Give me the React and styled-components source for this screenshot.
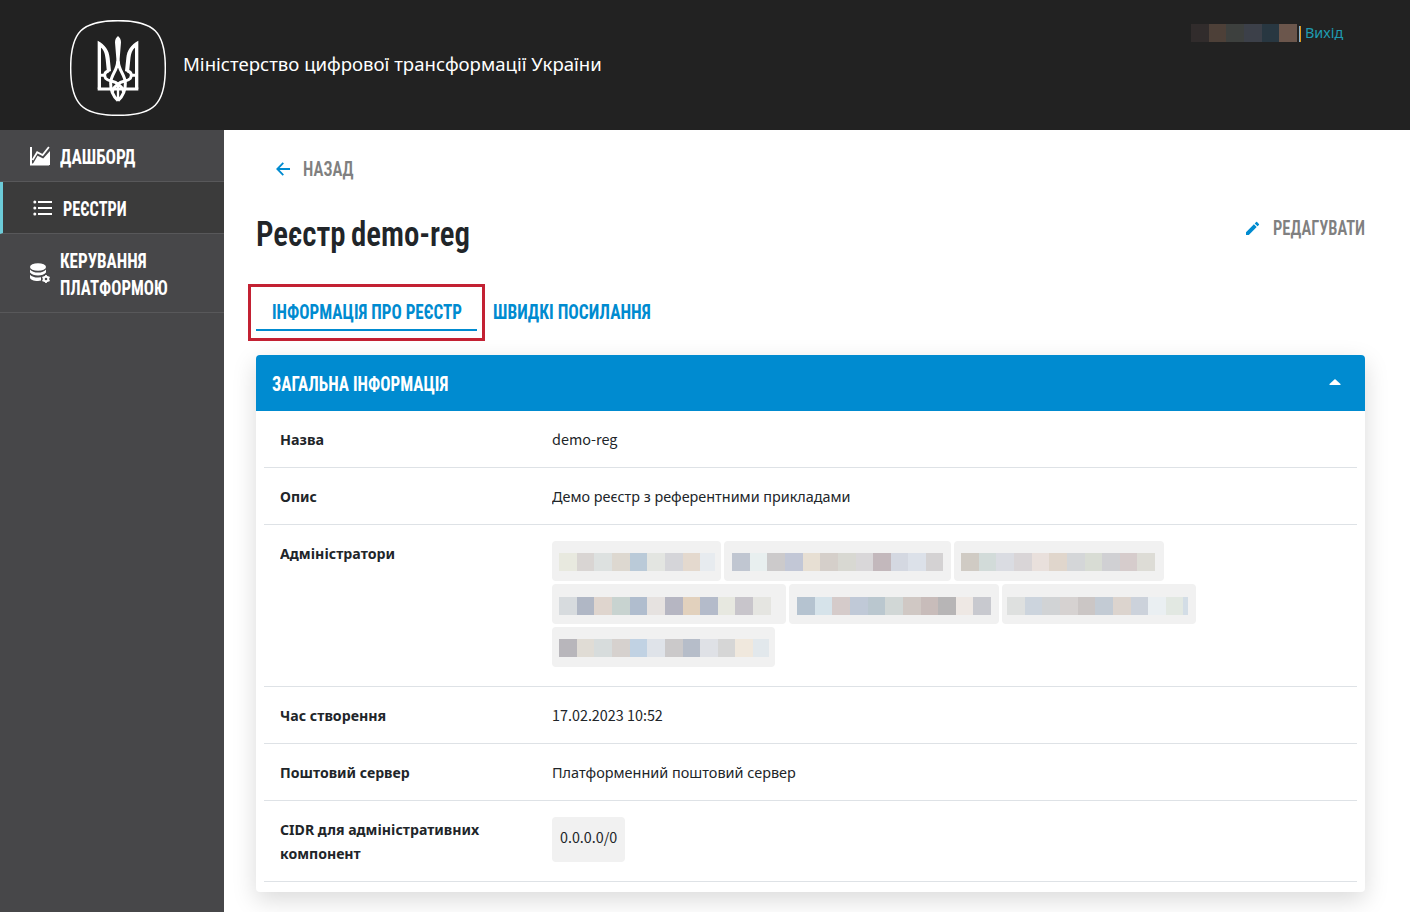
import React, { useLayoutEffect, useRef, useState } from "react";
import styled, { createGlobalStyle, css } from "styled-components";

const GlobalStyle = createGlobalStyle`
  *, *::before, *::after { box-sizing: border-box; }
  body {
    margin: 0;
    background: #fff;
    color: #212529;
    font-family: "Noto Sans", "Open Sans", sans-serif;
    overflow: hidden;
  }
  a { color: inherit; text-decoration: none; }
`;

const Slot = styled.span`
  display: inline-block;
  width: ${(p) => p.$width}px;
  white-space: nowrap;
`;

const Run = styled.span`
  display: inline-block;
  transform-origin: 0 50%;
`;

/* Condenses a line of text so that it takes exactly the given width. */
function Fit({ width, children }) {
  const ref = useRef(null);
  const [scale, setScale] = useState(1);
  useLayoutEffect(() => {
    setScale(width / ref.current.offsetWidth);
  }, [width, children]);
  return (
    <Slot $width={width}>
      <Run ref={ref} style={{ transform: `scaleX(${scale})` }}>
        {children}
      </Run>
    </Slot>
  );
}

const condensed = css`
  font-family: Roboto, "Liberation Sans Narrow", sans-serif;
  font-stretch: 75%;
  font-size: 19.6px;
  font-weight: 750;
  line-height: 27px;
`;

const Page = styled.div`
  display: flex;
  flex-direction: column;
  height: 912px;
`;

const Header = styled.header`
  display: flex;
  align-items: flex-start;
  height: 130px;
  padding: 20px 67px 0 70px;
  background: #222;
  color: #fff;
`;

const HeaderTitle = styled.div`
  margin: 30px auto 0 17px;
  font-size: 18.8px;
  line-height: 28px;
`;

const UserBar = styled.div`
  display: flex;
  align-items: flex-start;
  padding-top: 4px;
`;

const Divider = styled.span`
  width: 2px;
  height: 16px;
  margin: 2px 4px 0 2px;
  background: linear-gradient(90deg, #8fb4cc 50%, #e39a1b 50%);
`;

const LogoutLink = styled.a`
  font-size: 14.8px;
  line-height: 20px;
  margin-top: -2px;
  color: #1f9ab0;
`;

const Body = styled.div`
  display: flex;
  flex: 1;
  min-height: 0;
`;

const Sidebar = styled.nav`
  width: 224px;
  flex: none;
  background: #474749;
`;

const NavItem = styled.a`
  ${condensed}
  display: flex;
  align-items: center;
  gap: 10px;
  padding: 12px 0 12px 30px;
  border-bottom: 1px solid #58585a;
  border-left: ${(p) => (p.$active ? "3px solid #6ccbd8" : "0")};
  background: ${(p) => (p.$active ? "#3b3b3b" : "transparent")};
  color: #fff;

  svg { flex: none; }
`;

const NavLabel = styled.span`
  display: flex;
  flex-direction: column;
  padding-top: 2px;
  margin-bottom: -2px;
`;

const Main = styled.main`
  flex: 1;
  padding: 26px 45px 0 32px;
`;

const TextAction = styled.a`
  ${condensed}
  font-weight: 650;
  display: flex;
  align-items: center;
  color: #808080;
`;

const BackLink = styled(TextAction)`
  gap: 13px;
  padding-left: 20px;

  svg { margin-top: -1px; }
`;

const EditLink = styled(TextAction)`
  gap: 13px;
`;

const TitleRow = styled.div`
  display: flex;
  justify-content: space-between;
  align-items: flex-start;
  height: 101px;
  padding-top: 32px;
`;

const Title = styled.h1`
  ${condensed}
  margin: -2px 0 0;
  font-size: 35.5px;
  font-weight: 640;
  line-height: 42px;
  word-spacing: -2px;
  color: #212529;
`;

const Tabs = styled.div`
  display: flex;
  align-items: center;
  height: 57px;
  margin-left: -8px;
`;

const TabFrame = styled.div`
  height: 57px;
  padding: 10px 5px 0;
  border: 3px solid #c32133;
`;

const Tab = styled.a`
  ${condensed}
  display: block;
  height: 34px;
  padding: 2px ${(p) => (p.$active ? 15.5 : 9)}px 0 ${(p) => (p.$active ? 16 : 8)}px;
  border-bottom: ${(p) => (p.$active ? "2px solid #008bd0" : "0")};
  margin-bottom: ${(p) => (p.$active ? 0 : -2)}px;
  color: #008bd0;
`;

const Card = styled.section`
  height: 537px;
  margin-top: 14px;
  border-radius: 4px;
  background: #fff;
  box-shadow: 0 8px 24px rgba(0, 0, 0, 0.15);
`;

const CardHeader = styled.header`
  ${condensed}
  display: flex;
  align-items: center;
  justify-content: space-between;
  height: 56px;
  padding: 3px 24px 0 16px;
  border-radius: 4px 4px 0 0;
  background: #008bd0;
  color: #fff;

  svg { margin-top: -5px; }
`;

const Rows = styled.dl`
  margin: 0 8px;
`;

const Row = styled.div`
  display: flex;
  height: ${(p) => p.$height}px;
  padding: 16px;
  border-bottom: 1px solid #dee2e6;
  font-size: 14.8px;
  line-height: 24px;
`;

const Key = styled.dt`
  display: flex;
  flex-direction: column;
  width: 272px;
  flex: none;
  font-weight: 700;
`;

const Value = styled.dd`
  margin: 0;
  font-family: ${(p) => (p.$latin ? '"Noto Sans CJK SC", ' : "")}"Noto Sans", sans-serif;
  font-size: ${(p) => (p.$latin ? 14.3 : 14.8)}px;
`;

const ChipList = styled.div`
  display: flex;
  flex-wrap: wrap;
  align-content: flex-start;
  gap: 3px;
  width: 660px;
`;

const Chip = styled.span`
  display: flex;
  width: ${(p) => p.$width}px;
  height: 40px;
  padding: ${(p) => p.$top}px 0 0 ${(p) => p.$left}px;
  border-radius: 4px;
  background: #f1f1f1;
`;

const AddressChip = styled.span`
  display: block;
  height: 45px;
  padding: 8px;
  border-radius: 4px;
  background: #f1f1f1;
`;

const Strip = styled.span`
  display: flex;
  width: ${(p) => p.$width}px;
  height: 18px;
  overflow: hidden;
`;

const Cell = styled.span`
  flex: none;
  width: ${(p) => p.$width}px;
  background: ${(p) => p.$color};
`;

const CELL_WIDTHS = [18, 17, 18, 18, 17, 18, 18, 17, 18, 17, 18, 18];

function Mosaic({ width, colors }) {
  return (
    <Strip $width={width}>
      {colors.split(" ").map((c, i) => (
        <Cell key={i} $width={CELL_WIDTHS[i]} $color={`#${c}`} />
      ))}
    </Strip>
  );
}

const ADMINS = [
  { w: 169, left: 7, top: 12, strip: 156, colors: "e8e9df d9d5d3 dde1e0 ddd8d0 bacad8 e3e5e1 d5d5d9 e4d9ce e7ebef" },
  { w: 227, left: 8, top: 12, strip: 211, colors: "c0c6d1 e8efef cccacb c2c7d6 e7dfd3 d5cfca d8d8d2 d9d7d9 c3b8bc d4d8e1 dce1e9 d4d2d3" },
  { w: 210, left: 7, top: 12, strip: 194, colors: "d0cbc4 d2dbd9 dadce2 d9d5d7 e9e0dc e0d6cc d4d6d8 d8dcd4 d0d0d3 d6cccc dddcd6" },
  { w: 234, left: 7, top: 13, strip: 212, colors: "d7dbde b0b7c5 dfd5ce c8d3d0 b0bdce e6e2e0 b6b6c2 e2d1bd b4bbca e7e8e0 c8c5cb e5e5e1" },
  { w: 210, left: 8, top: 13, strip: 194, colors: "b5c3d0 d6e3ea d5cbca c0c9d7 bac7cf d1d7d6 d0c8c4 c8bcba b7b5b6 eee8e4 c8c9cf" },
  { w: 194, left: 5, top: 13, strip: 181, colors: "dee0df ccd4dd d1d3d5 d6d2d1 cbc6c5 c3cbd4 dcd4ce ccd2db eaeff2 e2e8e2 d3dde6" },
  { w: 223, left: 7, top: 12, strip: 210, colors: "b8b6bb e0dcd5 d7dcdc d6d1ce c1d2e3 dfe3e9 cbc9ca b6bdc9 dfe1e6 d6d6d6 f0e8dd e2e8ec" },
];

const Emblem = () => (
  <svg width="96" height="96" viewBox="30 30 288 288" fill="none" stroke="#fff">
    <path
      d="M174 32C282 32 316 66 316 174S282 316 174 316 32 282 32 174 66 32 174 32Z"
      strokeWidth="4.5"
    />
    <g transform="translate(102 66)" strokeWidth="9">
      <path d="M72 12C67 16 63 22 63 31L67 80V108H77V80L81 31C81 22 77 16 72 12Z" fill="#fff" stroke="none" />
      <path d="M11 26C33 38 45 54 47 78L51 117L39 122L35 82C33 64 29 53 21 47V170H11Z" fill="#fff" stroke="none" />
      <path d="M133 26C111 38 99 54 97 78L93 117L105 122L109 82C111 64 115 53 123 47V170H133Z" fill="#fff" stroke="none" />
      <path d="M11 171H133" />
      <path d="M15 130H34M129 130H110" />
      <path d="M44 117C32 119 29 130 35 139C43 149 60 145 73 157C86 167 90 174 88 182" />
      <path d="M100 117C112 119 115 130 109 139C101 149 84 145 71 157C58 167 54 174 56 182" />
      <path d="M71 88C70 117 51 127 50 153C49 178 57 192 72 206M73 88C74 117 93 127 94 153C95 178 87 192 72 206" />
      <path d="M72 156V206" strokeWidth="7" />
    </g>
  </svg>
);

const ChartIcon = () => (
  <svg width="20" height="20" viewBox="0 0 20 20">
    <path d="M1 1V18.500H19" fill="none" stroke="#fff" strokeWidth="2" />
    <path d="M2.500 14L7.200 6.200L12.600 9L18.900 1" fill="none" stroke="#fff" strokeWidth="1.800" />
    <path d="M2.500 18.500L7.600 9.800L13.200 12.400L20 5V19H2.500Z" fill="#fff" />
  </svg>
);

const ListIcon = () => (
  <svg width="20" height="20" viewBox="0 0 20 20" fill="#fff">
    <circle cx="1.8" cy="4" r="1.5" />
    <circle cx="1.8" cy="10" r="1.5" />
    <circle cx="1.8" cy="16" r="1.5" />
    <path d="M5 3H19V5H5ZM5 9H19V11H5ZM5 15H19V17H5Z" />
  </svg>
);

const DatabaseIcon = () => (
  <svg width="20" height="20" viewBox="0 0 20 20" fill="#fff">
    <ellipse cx="8" cy="4" rx="8" ry="3.8" />
    <path d="M0 6.500C1.500 8.600 4.500 9.600 8 9.600S14.500 8.600 16 6.500V9.500C14.500 11.500 11.500 12.500 8 12.500S1.500 11.500 0 9.500Z" />
    <path d="M0 11.700C1.500 13.500 4.500 14.600 8 14.600L11 14.200V17.400L8 18C3.500 18 0 16.500 0 14.500Z" />
    <circle cx="16" cy="16" r="2.300" fill="none" stroke="#fff" strokeWidth="2" />
    <path
      d="M16 12V13.500M16 18.500V20M12.500 14L14 14.900M18 17.100L19.500 18M12.500 18L14 17.100M18 14.900L19.500 14"
      stroke="#fff"
      strokeWidth="1.700"
    />
  </svg>
);

const ArrowIcon = () => (
  <svg width="14" height="14" viewBox="0 0 14 14" fill="none" stroke="#008bd0" strokeWidth="1.800">
    <path d="M14 7H1.500M7.300 .9L1.300 7L7.300 13.100" />
  </svg>
);

const PencilIcon = () => (
  <svg width="15" height="15" viewBox="0 0 15 15" fill="#008bd0">
    <path d="M1 11.200V14H3.800L11.700 6.100L8.900 3.300ZM9.700 2.500L12.500 5.300L13.900 3.900Q14.400 3.400 13.900 2.900L12.100 1.100Q11.600 .6 11.100 1.100Z" />
  </svg>
);

const CaretIcon = () => (
  <svg width="12" height="6" viewBox="0 0 12 6" fill="#fff">
    <path d="M6 0L11.500 5V6H.5V5Z" />
  </svg>
);

export default function App() {
  return (
    <Page>
      <GlobalStyle />
      <Header>
        <Emblem />
        <HeaderTitle>
          <Fit width={418.5}>Міністерство цифрової трансформації України</Fit>
        </HeaderTitle>
        <UserBar>
          <Mosaic width={106} colors="312c2c 4d4038 3d403e 3c4049 283741 6b564c" />
          <Divider />
          <LogoutLink href="#">
            <Fit width={38}>Вихід</Fit>
          </LogoutLink>
        </UserBar>
      </Header>
      <Body>
        <Sidebar>
          <NavItem href="#">
            <ChartIcon />
            <NavLabel>
              <Fit width={75}>ДАШБОРД</Fit>
            </NavLabel>
          </NavItem>
          <NavItem href="#" $active>
            <ListIcon />
            <NavLabel>
              <Fit width={64}>РЕЄСТРИ</Fit>
            </NavLabel>
          </NavItem>
          <NavItem href="#">
            <DatabaseIcon />
            <NavLabel>
              <Fit width={87}>КЕРУВАННЯ</Fit>
              <Fit width={107.5}>ПЛАТФОРМОЮ</Fit>
            </NavLabel>
          </NavItem>
        </Sidebar>
        <Main>
          <BackLink href="#">
            <ArrowIcon />
            <Fit width={50.5}>НАЗАД</Fit>
          </BackLink>
          <TitleRow>
            <Title>
              <Fit width={213.5}>Реєстр demo-reg</Fit>
            </Title>
            <EditLink href="#">
              <PencilIcon />
              <Fit width={92.5}>РЕДАГУВАТИ</Fit>
            </EditLink>
          </TitleRow>
          <Tabs>
            <TabFrame>
              <Tab href="#" $active>
                <Fit width={189.5}>ІНФОРМАЦІЯ ПРО РЕЄСТР</Fit>
              </Tab>
            </TabFrame>
            <Tab href="#">
              <Fit width={157.5}>ШВИДКІ ПОСИЛАННЯ</Fit>
            </Tab>
          </Tabs>
          <Card>
            <CardHeader>
              <Fit width={176.5}>ЗАГАЛЬНА ІНФОРМАЦІЯ</Fit>
              <CaretIcon />
            </CardHeader>
            <Rows>
              <Row $height={57}>
                <Key><Fit width={43.5}>Назва</Fit></Key>
                <Value $latin><Fit width={65.5}>demo-reg</Fit></Value>
              </Row>
              <Row $height={57}>
                <Key><Fit width={37}>Опис</Fit></Key>
                <Value><Fit width={298.5}>Демо реєстр з референтними прикладами</Fit></Value>
              </Row>
              <Row $height={162}>
                <Key><Fit width={115}>Адміністратори</Fit></Key>
                <Value>
                  <ChipList>
                    {ADMINS.map((a, i) => (
                      <Chip key={i} $width={a.w} $left={a.left} $top={a.top}>
                        <Mosaic width={a.strip} colors={a.colors} />
                      </Chip>
                    ))}
                  </ChipList>
                </Value>
              </Row>
              <Row $height={57}>
                <Key><Fit width={106.5}>Час створення</Fit></Key>
                <Value $latin><Fit width={110.5}>17.02.2023 10:52</Fit></Value>
              </Row>
              <Row $height={57}>
                <Key><Fit width={129.5}>Поштовий сервер</Fit></Key>
                <Value><Fit width={244}>Платформенний поштовий сервер</Fit></Value>
              </Row>
              <Row $height={81}>
                <Key>
                  <Fit width={199.5}>CIDR для адміністративних</Fit>
                  <Fit width={81}>компонент</Fit>
                </Key>
                <Value $latin>
                  <AddressChip><Fit width={57}>0.0.0.0/0</Fit></AddressChip>
                </Value>
              </Row>
            </Rows>
          </Card>
        </Main>
      </Body>
    </Page>
  );
}
